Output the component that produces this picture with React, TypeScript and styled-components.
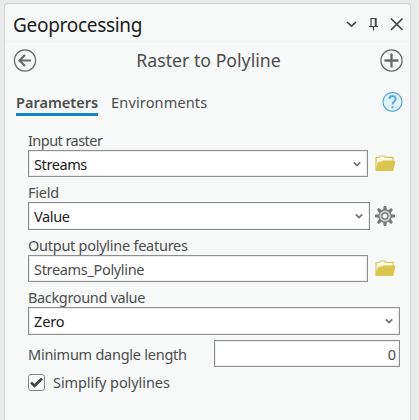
import React from "react";
import styled, { createGlobalStyle } from "styled-components";

const Global = createGlobalStyle`
  * { box-sizing: border-box; }
  body { margin: 0; background: #eaeaea; overflow: hidden; font-family: "Noto Sans", sans-serif; }
  svg { display: block; flex: none; }
`;

const Panel = styled.main`
  width: 407px;
  height: 417px;
  margin: 3px 0 0 4px;
  overflow: hidden;
  background: #f7f9f8;
  border: 1px solid #cfd0d2;
  border-bottom: 0;
  border-radius: 4px 4px 0 0;
`;

const Text = styled.span<{ $size?: number; $spacing?: number; $color?: string; $weight?: number }>`
  font-size: ${(p) => p.$size ?? 14.5}px;
  letter-spacing: ${(p) => p.$spacing ?? 0}px;
  color: ${(p) => p.$color ?? "#4c4c4c"};
  font-weight: ${(p) => p.$weight ?? 400};
  line-height: 20px;
  white-space: pre;
`;

const TitleBar = styled.header`
  height: 38px;
  padding: 4px 6px 0 8px;
  display: flex;
  align-items: center;
  border-bottom: 1px solid #f0f2f1;
`;

const WindowButtons = styled.div`
  margin-left: auto;
  display: flex;
  align-items: center;
`;

const ToolBar = styled.div`
  height: 37px;
  padding: 0 6px 0 8px;
  display: flex;
  align-items: center;
  justify-content: space-between;
`;

const ToolTitle = styled.div`
  padding-bottom: 2px;
  display: flex;
`;

const TabBar = styled.nav`
  height: 39px;
  padding: 12px 7px 0 11px;
  display: flex;
  align-items: flex-start;
`;

const Tab = styled.div<{ $active?: boolean }>`
  height: 25px;
  margin-right: 13px;
  border-bottom: 3px solid ${(p) => (p.$active ? "#1482c8" : "transparent")};
`;

const Help = styled.div`
  margin-left: auto;
`;

const Form = styled.div`
  padding: 7px 0 0 23px;
`;

const Label = styled.div`
  height: 25px;
  padding-top: 5px;
  display: flex;
`;

const Row = styled.div<{ $gap?: number; $top?: number }>`
  display: flex;
  align-items: center;
  gap: ${(p) => p.$gap ?? 0}px;
  margin-top: ${(p) => p.$top ?? 0}px;
`;

const Field = styled.div<{ $width: number; $height?: number; $end?: boolean }>`
  width: ${(p) => p.$width}px;
  height: ${(p) => p.$height ?? 27}px;
  padding: 0 ${(p) => (p.$end ? 3 : 6)}px 0 5px;
  display: flex;
  align-items: center;
  justify-content: ${(p) => (p.$end ? "flex-end" : "space-between")};
  background: #fff;
  border: 1px solid #8e8e8e;
  box-shadow: inset 0 0 0 1px #ececec;
`;

const DangleLabel = styled.div`
  width: 186px;
  padding-top: 1px;
`;

const CheckBox = styled.div`
  width: 17px;
  height: 17px;
  margin-right: 8px;
  display: grid;
  place-items: center;
  background: #fff;
  border: 1px solid #858585;
  border-radius: 3px;
`;

const Chevron = () => (
  <svg width="8" height="6" viewBox="0 0 8 6" fill="none" stroke="#707070" strokeWidth="1.7">
    <path d="M.8 1.3 4 4.5 7.2 1.3" />
  </svg>
);

const Folder = () => (
  <svg width="21" height="17" viewBox="0 0 21 17">
    <path d="M1 15.5V2.5h3L5.2 1h4l1.2 1.3H18V6H8L6 7.3H3.4L1.5 15" fill="#fffdf0" stroke="#dac64f" strokeWidth="1.2" />
    <path d="M.5 16 3.3 7.2h4.2L9 5.7h11.5L18.3 16Z" fill="#dac64f" />
  </svg>
);

const Gear = () => (
  <svg width="20" height="20" viewBox="0 0 20 20">
    <g fill="#777">
      {[0, 45, 90, 135, 180, 225, 270, 315].map((a) => (
        <path key={a} d="M8.8 0h2.4l.8 5H8Z" transform={`rotate(${a} 10 10)`} />
      ))}
    </g>
    <circle cx="10" cy="10" r="6.2" fill="#d0d0d0" stroke="#777" strokeWidth="1.2" />
    <circle cx="10" cy="10" r="3" fill="#fff" stroke="#777" strokeWidth="1.3" />
  </svg>
);

export default function App() {
  return (
    <>
      <Global />
      <Panel>
        <TitleBar>
          <Text $size={19} $spacing={-0.3} $color="#1b1b1b">Geoprocessing</Text>
          <WindowButtons>
            <svg width="60" height="16" viewBox="0 0 60 16" fill="none" stroke="#444">
              <path d="m3 5 4.5 4.2L12 5" strokeWidth="1.7" />
              <path d="M27 1.5h5v8h-5zM25 9.5h9M29.5 9.5v4" strokeWidth="1.2" />
              <path d="M31.5 2v7" strokeWidth="1.5" />
              <path d="m47 1.5 11.5 11.5M58.5 1.5 47 13" strokeWidth="1.7" />
            </svg>
          </WindowButtons>
        </TitleBar>
        <ToolBar>
          <svg width="24" height="24" viewBox="0 0 24 24" fill="none" stroke="#696969">
            <circle cx="12" cy="11.5" r="10.6" strokeWidth="1.2" />
            <path d="M18 11.5H7M12 6 6.5 11.5 12 17" strokeWidth="2.2" />
          </svg>
          <ToolTitle><Text $size={17.7}>Raster to Polyline</Text></ToolTitle>
          <svg width="24" height="24" viewBox="0 0 24 24" fill="none" stroke="#696969">
            <circle cx="11.5" cy="11.5" r="10.6" strokeWidth="1.2" />
            <path d="M4.5 11.5h14M11.5 4.5v14" strokeWidth="2.3" />
          </svg>
        </ToolBar>
        <TabBar>
          <Tab $active><Text $weight={600}>Parameters</Text></Tab>
          <Tab><Text $spacing={0.15}>Environments</Text></Tab>
          <Help>
            <svg width="21" height="21" viewBox="0 0 21 21" fill="none" stroke="#55a9df">
              <circle cx="10.5" cy="10.8" r="9.5" fill="#e1f2fd" strokeWidth="1.2" />
              <path d="M7.4 8c0-4 6.3-3.9 6.3-.2 0 2.4-3.1 2.5-3.1 5.8M10.6 15.3v2" strokeWidth="2" />
            </svg>
          </Help>
        </TabBar>
        <Form>
          <Label><Text $spacing={-0.55}>Input raster</Text></Label>
          <Row $gap={7}>
            <Field $width={340}><Text $color="#1a1a1a" $spacing={-0.4}>Streams</Text><Chevron /></Field>
            <Folder />
          </Row>
          <Label><Text $spacing={-0.25}>Field</Text></Label>
          <Row $gap={5}>
            <Field $width={342} $height={28}><Text $color="#1a1a1a" $spacing={-0.35}>Value</Text><Chevron /></Field>
            <Gear />
          </Row>
          <Label><Text $spacing={-0.26}>Output polyline features</Text></Label>
          <Row $gap={7}>
            <Field $width={340}><Text $spacing={-0.33}>Streams_Polyline</Text></Field>
            <Folder />
          </Row>
          <Label><Text $spacing={-0.35}>Background value</Text></Label>
          <Field $width={372} $height={28}><Text $color="#1a1a1a" $spacing={-0.1}>Zero</Text><Chevron /></Field>
          <Row $top={5}>
            <DangleLabel><Text $spacing={-0.25}>Minimum dangle length</Text></DangleLabel>
            <Field $width={186} $end><Text>0</Text></Field>
          </Row>
          <Row $top={5}>
            <CheckBox>
              <svg width="13" height="11" viewBox="0 0 13 11" fill="none" stroke="#444" strokeWidth="2.7">
                <path d="m1 5.5 3.5 3.3L12 1.5" />
              </svg>
            </CheckBox>
            <Text $spacing={-0.08}>Simplify polylines</Text>
          </Row>
        </Form>
      </Panel>
    </>
  );
}
